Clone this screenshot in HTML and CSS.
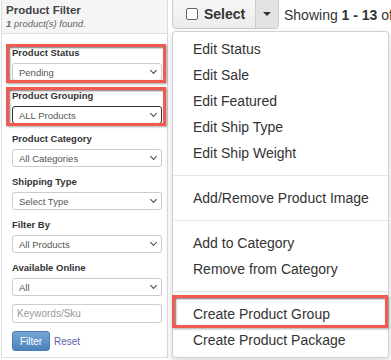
FILE: index.html
```html
<!DOCTYPE html>
<html lang="en">
<head>
  <meta charset="UTF-8">
  <title>Products</title>
  <link rel="stylesheet" href="styles.css">
</head>
<body>
  <div class="page">
    <!-- filter sidebar -->
    <div class="filter-panel">
      <div class="panel-head">
        <div class="panel-title">Product Filter</div>
        <div class="panel-sub"><b>1</b> product(s) found.</div>
      </div>
      <div class="panel-body">
        <div class="field marked">
          <label>Product Status</label>
          <div class="select-wrap"><select><option>Pending</option></select></div>
          <span class="mark"></span>
        </div>
        <div class="field marked">
          <label>Product Grouping</label>
          <div class="select-wrap"><select class="focused"><option>ALL Products</option></select></div>
          <span class="mark"></span>
        </div>
        <div class="field">
          <label>Product Category</label>
          <div class="select-wrap"><select><option>All Categories</option></select></div>
        </div>
        <div class="field">
          <label>Shipping Type</label>
          <div class="select-wrap"><select><option>Select Type</option></select></div>
        </div>
        <div class="field">
          <label>Filter By</label>
          <div class="select-wrap"><select><option>All Products</option></select></div>
        </div>
        <div class="field">
          <label>Available Online</label>
          <div class="select-wrap"><select><option>All</option></select></div>
        </div>
        <input type="text" class="keywords" placeholder="Keywords/Sku">
        <div class="actions">
          <button class="filter-btn">Filter</button>
          <a href="#" class="reset-link">Reset</a>
        </div>
      </div>
    </div>

    <!-- product list -->
    <div class="main">
      <div class="toolbar">
        <div class="btn-group">
          <button class="btn-select"><span class="check"></span>Select</button>
          <button class="btn-caret"><span class="caret"></span></button>
        </div>
        <div class="showing">Showing <b>1 - 13</b> of 13</div>
      </div>

      <ul class="dropdown">
        <li>Edit Status</li>
        <li>Edit Sale</li>
        <li>Edit Featured</li>
        <li>Edit Ship Type</li>
        <li>Edit Ship Weight</li>
        <li class="divider"></li>
        <li>Add/Remove Product Image</li>
        <li class="divider"></li>
        <li>Add to Category</li>
        <li>Remove from Category</li>
        <li class="divider"></li>
        <li class="marked">Create Product Group<span class="mark"></span></li>
        <li>Create Product Package</li>
      </ul>
    </div>
  </div>
</body>
</html>
```

FILE: styles.css
```css
* { box-sizing: border-box; margin: 0; padding: 0; }
body {
  font-family: "Liberation Sans", Arial, sans-serif;
  color: #333;
  background: #fff;
  overflow: hidden;
}
.page {
  display: flex;
  align-items: flex-start;
  width: 391px;
  height: 360px;
  overflow: hidden;
}
/* sidebar */
.filter-panel {
  width: 167px;
  margin-left: 1px;
  border: 1px solid #ddd;
  border-top: none;
  flex-shrink: 0;
}
.panel-head {
  height: 34px;
  padding: 4px 4px 0;
  background: #f5f5f5;
  border-bottom: 1px solid #e3e3e3;
}
.panel-title {
  font-size: 11.5px;
  font-weight: bold;
  color: #444;
  line-height: 13px;
}
.panel-sub {
  font-size: 9.5px;
  font-style: italic;
  color: #666;
  line-height: 12px;
  margin-top: 1px;
}
.panel-body {
  padding: 12px 4px 6px 10px;
}
.field {
  position: relative;
  margin-bottom: 8px;
}
.field label {
  display: block;
  font-size: 9.5px;
  font-weight: bold;
  line-height: 14px;
  margin-bottom: 3px;
}
.select-wrap {
  position: relative;
  width: 150px;
}
.select-wrap::after {
  content: "";
  position: absolute;
  right: 6px;
  top: 5px;
  width: 4px;
  height: 4px;
  border-right: 1.5px solid #444;
  border-bottom: 1.5px solid #444;
  transform: rotate(45deg);
}
.select-wrap select {
  appearance: none;
  -webkit-appearance: none;
  display: block;
  width: 100%;
  height: 18px;
  padding: 0 6px;
  font-family: inherit;
  font-size: 9.5px;
  color: #555;
  background: #fff;
  border: 1px solid #ccc;
  border-radius: 3px;
}
.select-wrap select.focused {
  border-color: #333;
}
.keywords {
  display: block;
  width: 150px;
  height: 19px;
  padding: 0 4px;
  font-family: inherit;
  font-size: 10px;
  border: 1px solid #ccc;
  border-radius: 3px;
}
.keywords::placeholder { color: #999; }
.actions {
  display: flex;
  align-items: center;
  gap: 4px;
  margin-top: 8px;
}
.filter-btn {
  width: 38px;
  height: 20px;
  font-family: inherit;
  font-size: 10px;
  color: #fff;
  background: linear-gradient(#76a6d6, #4c81b9);
  border: 1px solid #4a7db3;
  border-radius: 3px;
}
.reset-link {
  font-size: 10px;
  color: #5a5ea8;
  text-decoration: none;
}
/* annotation boxes */
.marked { position: relative; }
.mark {
  position: absolute;
  border: 3px solid #f25b4f;
  box-shadow: inset 1px 1px 2px rgba(0,0,0,0.55), 1px 1px 2px rgba(0,0,0,0.35);
  pointer-events: none;
}
.field .mark {
  top: -2px;
  bottom: -2px;
  left: -6px;
  right: -3px;
}
/* main area */
.main {
  position: relative;
  flex: 1;
  margin-left: 4px;
  height: 360px;
}
.toolbar {
  display: flex;
  align-items: center;
  white-space: nowrap;
}
.btn-group {
  display: flex;
  margin-top: -2px;
}
.btn-group button {
  height: 31px;
  font-family: inherit;
  border: 1px solid #ccc;
  color: #333;
}
.btn-select {
  display: flex;
  align-items: center;
  width: 84px;
  padding-left: 13px;
  font-size: 14px;
  font-weight: bold;
  background: linear-gradient(#f7f7f7, #ececec);
  border-radius: 4px 0 0 4px;
}
.check {
  width: 12px;
  height: 12px;
  margin-right: 6px;
  border: 1px solid #666;
  border-radius: 2px;
  background: #fff;
}
.btn-caret {
  width: 24px;
  margin-left: -1px;
  background: #e3e3e3;
  border-radius: 0 4px 4px 0;
}
.caret {
  display: inline-block;
  border-top: 4px solid #333;
  border-left: 4px solid transparent;
  border-right: 4px solid transparent;
  vertical-align: middle;
}
.showing {
  margin-left: 5px;
  font-size: 14px;
  color: #333;
}
.dropdown {
  position: absolute;
  top: 31px;
  left: 0;
  width: 217px;
  list-style: none;
  padding: 4px 0;
  background: #fff;
  border: 1px solid rgba(0,0,0,0.18);
  border-radius: 4px;
  box-shadow: 0 4px 10px rgba(0,0,0,0.15);
}
.dropdown li {
  height: 26px;
  line-height: 26px;
  padding-left: 20px;
  font-size: 14px;
  color: #333;
  white-space: nowrap;
}
.dropdown li.divider {
  height: 1px;
  margin: 9px 0;
  padding: 0;
  background: #e5e5e5;
}
.dropdown .mark {
  top: -6px;
  bottom: -1px;
  left: -1px;
  right: 0;
}
```
